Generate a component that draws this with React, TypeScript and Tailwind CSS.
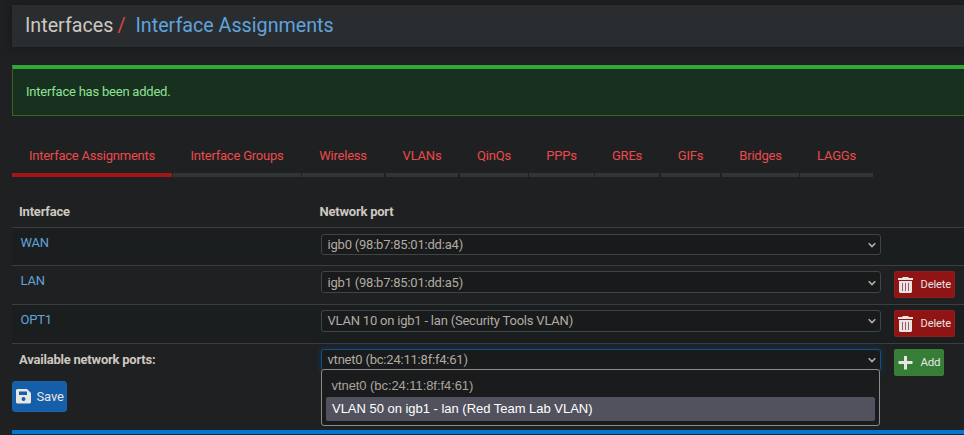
import type { ReactNode } from "react";

const tabs = [
  { label: "Interface Assignments", box: "w-[160px] mr-px" },
  { label: "Interface Groups", box: "w-[128px] mr-px" },
  { label: "Wireless", box: "w-[82px] mr-0.5" },
  { label: "VLANs", box: "w-[72px] mr-0.5" },
  { label: "QinQs", box: "w-[68px] mr-px" },
  { label: "PPPs", box: "w-[65px] mr-px" },
  { label: "GREs", box: "w-[64px] mr-0.5" },
  { label: "GIFs", box: "w-[59px] mr-0.5" },
  { label: "Bridges", box: "w-[77px] mr-px" },
  { label: "LAGGs", box: "w-[73px]" },
];

function Chevron() {
  return (
    <svg className="h-2 w-2 shrink-0" viewBox="0 0 8 8" fill="none" stroke="#b5b0a6" strokeWidth="1.6">
      <path d="M0.700 2.300 4 5.600 7.300 2.300" />
    </svg>
  );
}

function Select({ value, className }: { value: string; className: string }) {
  return (
    <div className={`flex w-[560px] items-center justify-between rounded-[3px] border bg-[#181a1b] pr-1 pl-[5.5px] text-[13px] tracking-[-0.21px] text-[#b2aca2] ${className}`}>
      <span>{value}</span>
      <Chevron />
    </div>
  );
}

function Row({ name, className, children }: { name: string; className: string; children: ReactNode }) {
  return (
    <div className={`flex items-start border-t border-[#3a3e41] ${className}`}>
      <span className="w-[309px] shrink-0 pt-[7px] pl-[8.5px] text-[13px] leading-4 text-[#61a3dc]">{name}</span>
      {children}
    </div>
  );
}

function TrashIcon() {
  return (
    <svg className="h-4 w-[15px] shrink-0" viewBox="0 0 15 16">
      <path fill="#e8e6e3" d="M4.500 0h6v1H15v2H0V1h4.500zM1 4h13v11l-1 1H2l-1-1z" />
      <path stroke="#a8546a" d="M4.500 6v8M7.500 6v8M10.500 6v8" />
    </svg>
  );
}

function DeleteButton() {
  return (
    <button className="mt-[5px] ml-[13px] flex h-[27px] w-[61px] items-center rounded-[2px] border border-[#8c1f1f] bg-[#901414] pl-[3px] text-[11px] tracking-[-0.08px] text-[#e8e6e3]">
      <TrashIcon />
      <span className="ml-[7.5px]">Delete</span>
    </button>
  );
}

export default function App() {
  return (
    <div className="h-[435px] w-[964px] overflow-hidden bg-[#1f2022] pt-[5px] pl-3 font-['Roboto',sans-serif] text-[13px] leading-4 tracking-[-0.22px]">
      <header className="flex h-[42px] items-center bg-[#2a2d30] pl-[13px] text-[19.7px] tracking-normal shadow-[0_0_8px_rgba(0,0,0,0.35)]">
        <span className="text-[#cdc8c0]">Interfaces</span>
        <span className="ml-[4px] text-[#e04444]">/</span>
        <span className="ml-[10px] text-[#61a3dc]">Interface Assignments</span>
      </header>
      <div className="mt-[18px] h-[51px] border-t-4 border-b border-l border-t-[#33a838] border-b-[#3d6120] border-l-[#3d6120] bg-[#18301f] pt-[15px] pl-[13px] text-[#8ee293]">
        Interface has been added.
      </div>
      <nav className="mt-8 flex h-[29px] text-[#ea4b4b]">
        {tabs.map((tab, i) => (
          <div key={tab.label} className={`shrink-0 border-b-4 text-center ${i === 0 ? "border-[#a31616]" : "border-[#313538]"} ${tab.box}`}>
            {tab.label}
          </div>
        ))}
      </nav>
      <div className="flex h-[50px] pt-[27px] font-bold text-[#cdc8c0]">
        <span className="w-[300.5px] pl-[7px]">Interface</span>
        <span className="pl-[7px]">Network port</span>
      </div>
      <Row name="WAN" className="h-[38px] bg-[#1b1e1f]">
        <Select value="igb0 (98:b7:85:01:dd:a4)" className="mt-1.5 h-[21px] border-[#3f4447]" />
      </Row>
      <Row name="LAN" className="h-[39px]">
        <Select value="igb1 (98:b7:85:01:dd:a5)" className="mt-[5px] h-[22px] border-[#3f4447] pt-px" />
        <DeleteButton />
      </Row>
      <Row name="OPT1" className="h-[39px] bg-[#1b1e1f]">
        <Select value="VLAN 10 on igb1 - lan (Security Tools VLAN)" className="mt-[5px] h-[22px] border-[#3f4447]" />
        <DeleteButton />
      </Row>
      <div className="flex h-[38px] items-start border-t border-[#3a3e41]">
        <span className="w-[309px] shrink-0 pt-2 pl-[7px] font-bold text-[#cdc8c0]">Available network ports:</span>
        <div className="relative">
          <Select value="vtnet0 (bc:24:11:8f:f4:61)" className="mt-[5px] h-[22px] border-[#134f82] shadow-[0_0_7px_rgba(10,80,130,0.5)]" />
          <div className="absolute top-[25px] left-0 z-10 h-[57px] w-[559px] rounded-[3px] border border-[#8b8b8b] bg-[#1a1b1d] px-1 pt-[3px] font-['Liberation_Sans',Arial,sans-serif] text-[13px] tracking-normal">
            <div className="h-6 pt-px pl-[5.5px] leading-6 tracking-[-0.07px] text-[#aaa59c]">vtnet0 (bc:24:11:8f:f4:61)</div>
            <div className="h-6 rounded-[2px] bg-[#52525e] pl-1.5 leading-6 tracking-[-0.02px] text-[#ffffff]">VLAN 50 on igb1 - lan (Red Team Lab VLAN)</div>
          </div>
        </div>
        <button className="mt-[5px] ml-[13px] flex h-[27px] w-[50px] items-center rounded-[2px] border border-[#388038] bg-[#367d38] pl-[3px] text-[11.5px] tracking-[-0.2px] text-[#e8e6e3]">
          <svg className="h-[15px] w-[15px] shrink-0" viewBox="0 0 15 15">
            <path fill="#e8e6e3" d="M6 1h3v5h5.500v3H9v5.500H6V9H.5V6H6z" />
          </svg>
          <span className="ml-[7.5px] pb-0.5">Add</span>
        </button>
      </div>
      <button className="flex h-[31px] w-[55px] items-center rounded-[3px] border border-[#1d64a5] bg-[#155ea9] pl-[3px] text-[13px] tracking-[-0.15px] text-[#e8e6e3]">
        <svg className="h-[15px] w-[15px] shrink-0" viewBox="0 0 15 15">
          <path fill="#e8e6e3" fillRule="evenodd" d="M1 0h10l4 4v9.500l-1 1H1l-1-1V1zM3 2.500v3.500h8V2.500zM7.500 8a2 2 0 1 0 0 4 2 2 0 0 0 0-4z" />
        </svg>
        <span className="ml-[5.5px]">Save</span>
      </button>
      <div className="mt-[18px] h-[5px] border-t-4 border-[#0675d1] bg-[#062e3c]" />
    </div>
  );
}
